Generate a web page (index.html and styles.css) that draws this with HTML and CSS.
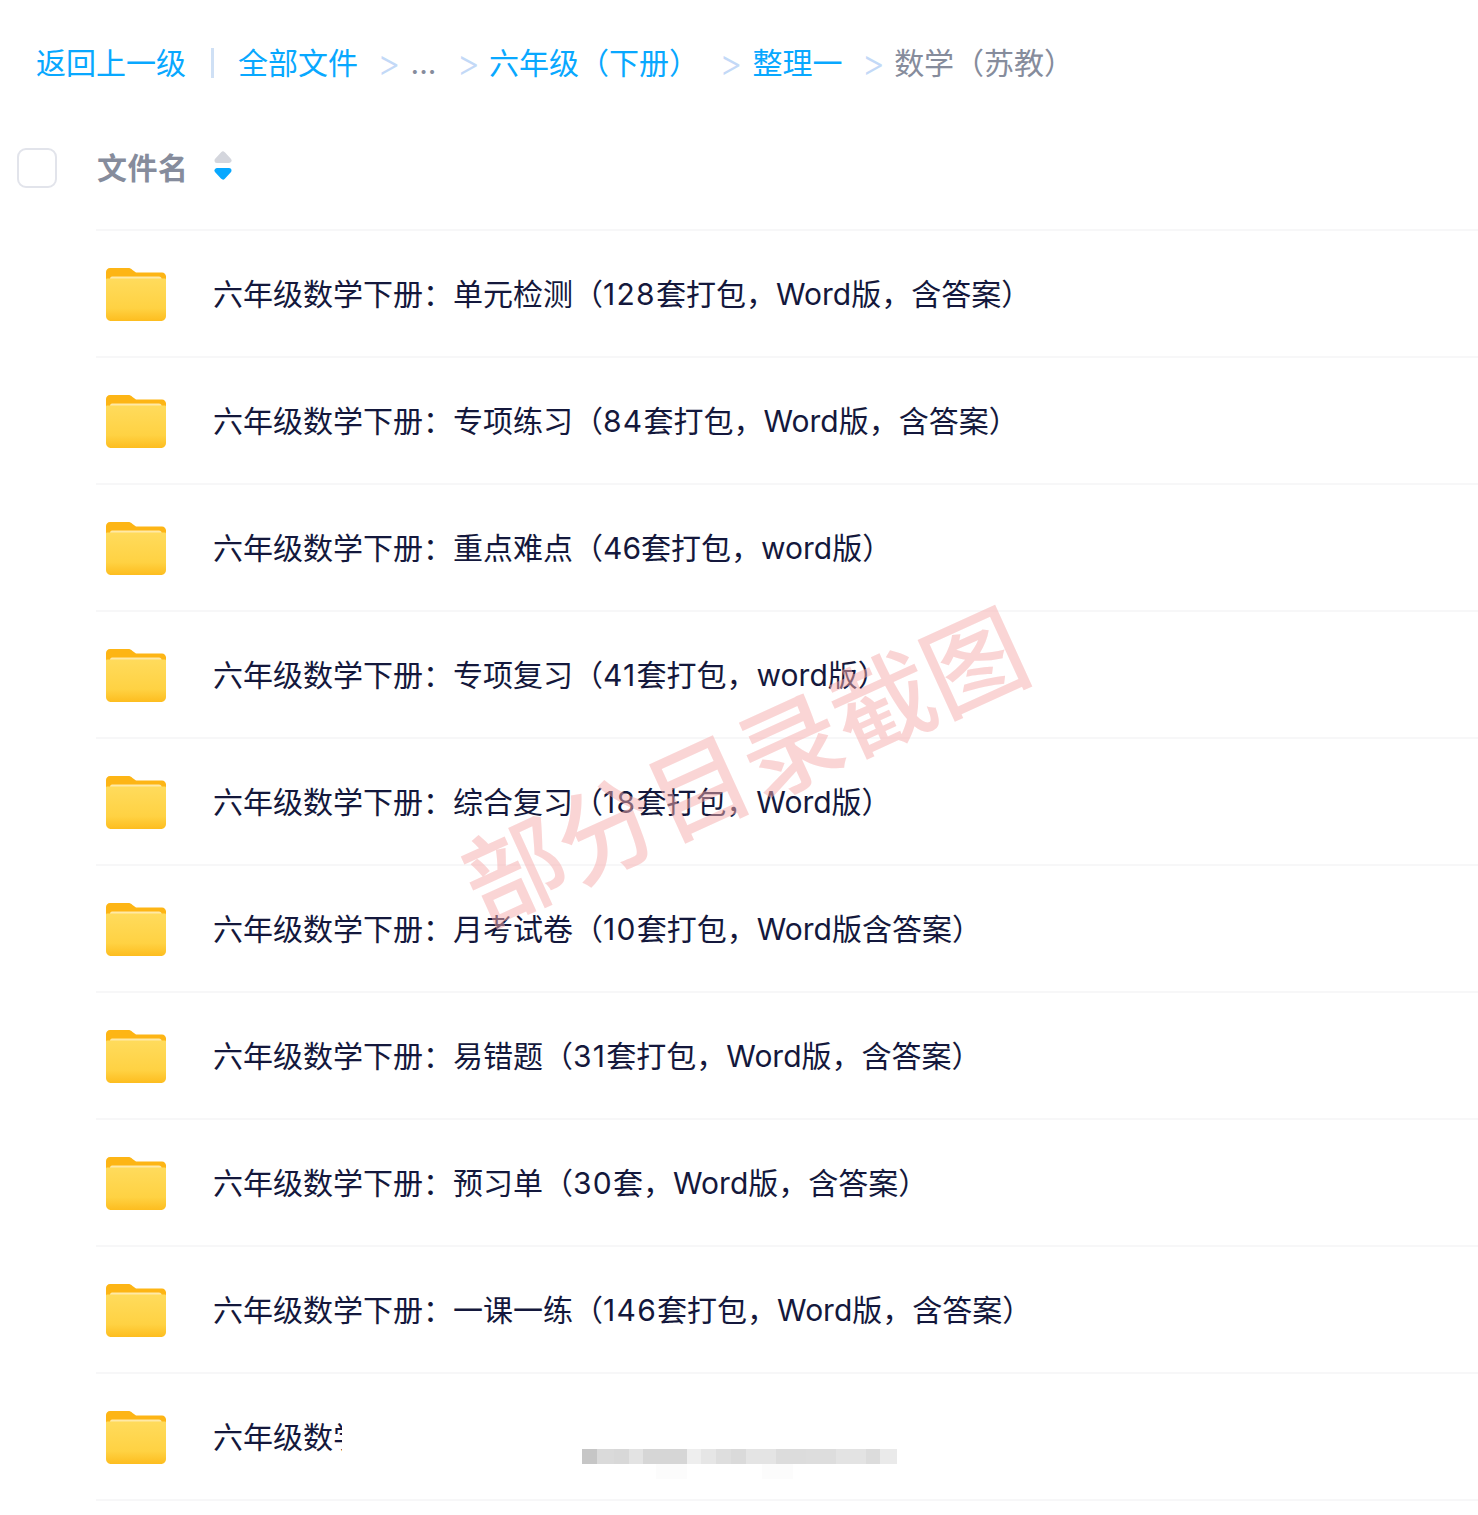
FILE: index.html
```html
<!DOCTYPE html>
<html lang="zh-CN">

<head>
    <meta charset="UTF-8">
    <meta name="viewport" content="width=device-width, initial-scale=1.0">
    <title>部分目录截图</title>
    <link rel="stylesheet" href="styles.css">
</head>

<body>
    <nav class="crumbs">
        <a class="back">返回上一级</a>
        <span class="pipe"></span>
        <a class="all">全部文件</a>
        <span class="sep">&gt;</span>
        <span class="more">...</span>
        <span class="sep">&gt;</span>
        <a class="grade">六年级（下册）</a>
        <span class="sep">&gt;</span>
        <a class="tidy">整理一</a>
        <span class="sep">&gt;</span>
        <span class="current">数学（苏教）</span>
    </nav>

    <div class="head">
        <span class="check"></span>
        <span class="head-name">文件名</span>
        <svg class="sort" viewBox="0 0 18 30">
            <path fill="#d4d6dd" stroke="#d4d6dd" stroke-width="5" stroke-linejoin="round" d="M9 3l6 6.500H3z" />
            <path fill="#08a8ff" stroke="#08a8ff" stroke-width="5" stroke-linejoin="round" d="M3 19.500h12L9 26z" />
        </svg>
    </div>

    <svg width="0" height="0" class="defs">
        <defs>
            <linearGradient id="front" x1="0" y1="0" x2="0" y2="1">
                <stop offset="0" stop-color="#ffdb5c" />
                <stop offset=".7" stop-color="#ffd243" />
                <stop offset="1" stop-color="#fdbd1f" />
            </linearGradient>
            <symbol id="folder" viewBox="0 0 60 53">
                <path fill="#fdb515" d="M4 0h18c2 0 3 .6 4.500 2L30 4.500h26c2.200 0 4 1.800 4 4V20H0V4c0-2.200 1.800-4 4-4z" />
                <path fill="#ffe9a6" d="M6 8.500h47c1.500 0 2.500 1 2.500 2V14H4v-3.500c0-1 1-2 2-2z" />
                <path fill="url(#front)" d="M0 11.500c0-.6.600-1 1.500-1h57c.9 0 1.500.4 1.500 1V48c0 2.800-2.200 5-5 5H5c-2.800 0-5-2.200-5-5z" />
            </symbol>
        </defs>
    </svg>

    <ul class="files">
        <li><svg class="folder"><use href="#folder" /></svg><span class="name">六年级数学下册：单元检测（<span class="n">128</span>套打包，Word版，含答案）</span></li>
        <li><svg class="folder"><use href="#folder" /></svg><span class="name">六年级数学下册：专项练习（<span class="n">84</span>套打包，Word版，含答案）</span></li>
        <li><svg class="folder"><use href="#folder" /></svg><span class="name">六年级数学下册：重点难点（46套打包，word版）</span></li>
        <li><svg class="folder"><use href="#folder" /></svg><span class="name">六年级数学下册：专项复习（<span class="n">41</span>套打包，word版）</span></li>
        <li><svg class="folder"><use href="#folder" /></svg><span class="name">六年级数学下册：综合复习（<span class="n">18</span>套打包，Word版）</span></li>
        <li><svg class="folder"><use href="#folder" /></svg><span class="name">六年级数学下册：月考试卷（<span class="n">10</span>套打包，Word版含答案）</span></li>
        <li><svg class="folder"><use href="#folder" /></svg><span class="name">六年级数学下册：易错题（<span class="n">31</span>套打包，Word版，含答案）</span></li>
        <li><svg class="folder"><use href="#folder" /></svg><span class="name">六年级数学下册：预习单（<span class="n">30</span>套，Word版，含答案）</span></li>
        <li><svg class="folder"><use href="#folder" /></svg><span class="name">六年级数学下册：一课一练（<span class="n">146</span>套打包，Word版，含答案）</span></li>
        <li><svg class="folder"><use href="#folder" /></svg><span class="name cut">六年级数学下册</span></li>
    </ul>

    <div class="watermark">部分目录截图</div>
    <div class="mosaic"></div>
    <div class="mosaic-low"></div>
</body></html>
```

FILE: styles.css
```css
* {
    box-sizing: border-box;
}

body {
    position: relative;
    margin: 0;
    height: 1515px;
    overflow: hidden;
    background-color: #FFF;
    font-family: Inter, "Noto Sans CJK SC", sans-serif;
    font-size: 30px;
    line-height: 40px;
    color: #14183c;
}

.crumbs {
    display: flex;
    align-items: center;
    height: 40px;
    margin-top: 43px;
    padding-left: 36px;
    color: #08a8ff;
    white-space: nowrap;
}

.crumbs a {
    color: #08a8ff;
}

.pipe {
    width: 3px;
    height: 30px;
    margin: 0 24px 0 25px;
    background-color: #cfe0f5;
}

.all {
    margin-right: -2px;
}

.sep {
    margin: 0 10px 0 21px;
    font-size: 36px;
    font-weight: 300;
    color: #c3d9f7;
}

.more {
    width: 25px;
    color: #868c9c;
}

.grade {
    margin: 0 -1px 0 -1px;
}

.tidy {
    margin-right: -2px;
}

.current {
    margin-left: -1px;
    color: #868c9c;
}

.head {
    display: flex;
    align-items: center;
    height: 40px;
    margin-top: 65px;
    padding-left: 17px;
}

.check {
    width: 40px;
    height: 40px;
    margin-right: 40px;
    border: 2px solid #e2e4eb;
    border-radius: 9px;
}

.head-name {
    width: 117px;
    font-weight: 700;
    letter-spacing: .5px;
    color: #868c9c;
}

.sort {
    width: 18px;
    height: 30px;
    margin-top: -4px;
}

.defs {
    position: absolute;
}

.files {
    margin: 41px 0 0 96px;
    padding: 0;
    list-style: none;
    border-top: 2px solid #f7f7f8;
}

.files li {
    display: flex;
    align-items: center;
    height: 127px;
    padding: 2px 0 0 10px;
    border-bottom: 2px solid #f7f7f8;
}

.folder {
    flex: none;
    width: 60px;
    height: 53px;
    margin-right: 47px;
}

.name {
    margin-bottom: 2px;
    white-space: nowrap;
}

.n {
    letter-spacing: 1.3px;
}

.cut {
    width: 129px;
    overflow: hidden;
}

.watermark {
    position: absolute;
    top: 701px;
    left: 422px;
    width: 640px;
    font-family: "Noto Sans CJK SC", sans-serif;
    font-size: 101px;
    line-height: 120px;
    font-weight: 500;
    text-align: center;
    white-space: nowrap;
    color: #f7adad;
    opacity: .5;
    transform: rotate(-24.5deg);
}

.mosaic {
    position: absolute;
    top: 1449px;
    left: 582px;
    width: 315px;
    height: 15px;
    background: linear-gradient(to right,
        #c6c6c6 0 15px, #dadada 15px 32px, #d8d8d8 32px 47px, #e3e3e3 47px 61px, #d6d6d6 61px 105px,
        #eeeeee 105px 119px, #e6e6e6 119px 134px, #dedede 134px 149px, #dadada 149px 164px, #e4e4e4 164px 194px,
        #dcdcdc 194px 224px, #dddddd 224px 254px, #e3e3e3 254px 284px, #dcdcdc 284px 298px, #eaeaea 298px 315px);
}

.mosaic-low {
    position: absolute;
    top: 1464px;
    left: 656px;
    width: 137px;
    height: 15px;
    background: linear-gradient(to right,
        #fcfcfc 0 31px, #fff 31px 106px, #fcfcfc 106px 137px);
}
```
